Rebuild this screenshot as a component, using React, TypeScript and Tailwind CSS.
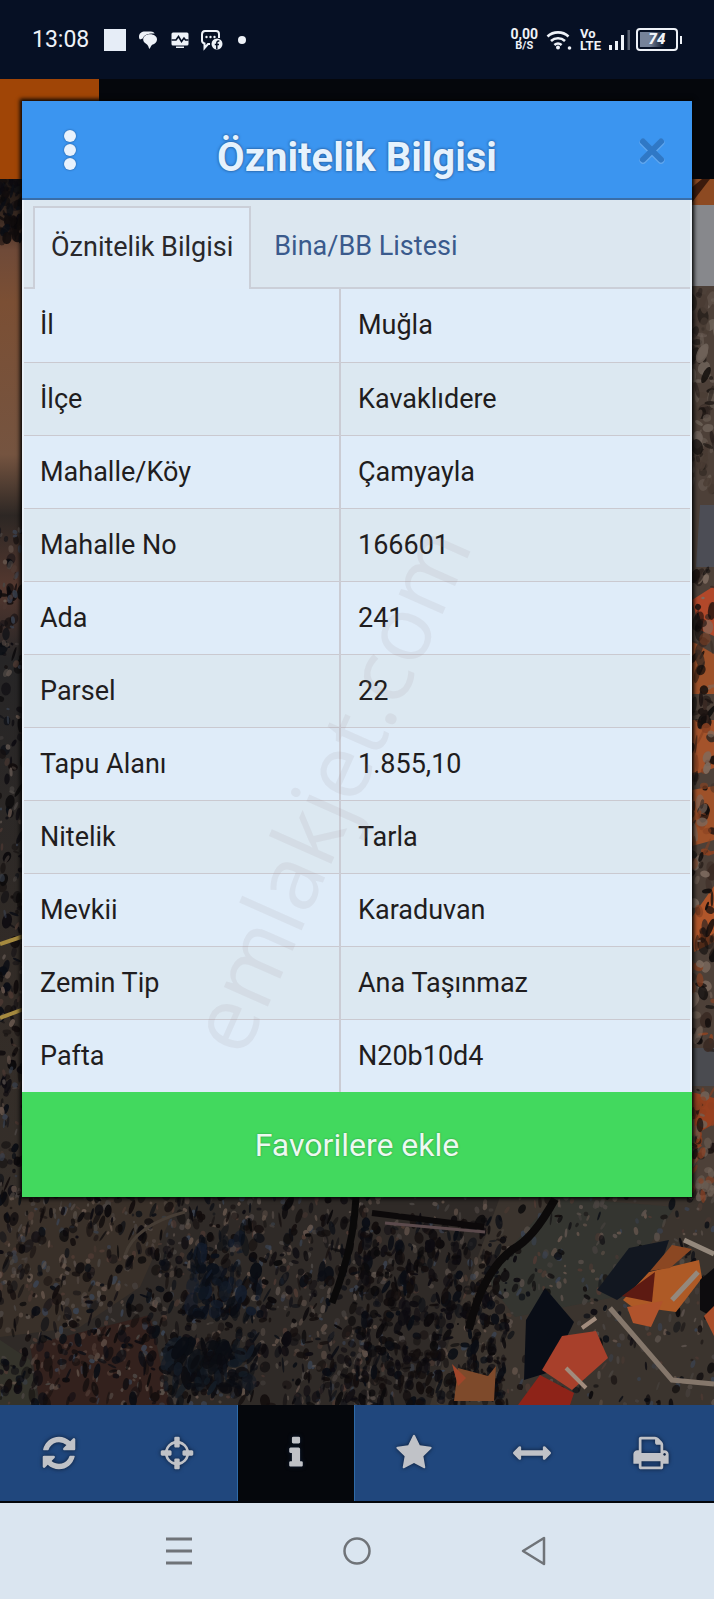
import { useState } from "react";

type Row = { label: string; value: string };

const rows: Row[] = [
  { label: "İl", value: "Muğla" },
  { label: "İlçe", value: "Kavaklıdere" },
  { label: "Mahalle/Köy", value: "Çamyayla" },
  { label: "Mahalle No", value: "166601" },
  { label: "Ada", value: "241" },
  { label: "Parsel", value: "22" },
  { label: "Tapu Alanı", value: "1.855,10" },
  { label: "Nitelik", value: "Tarla" },
  { label: "Mevkii", value: "Karaduvan" },
  { label: "Zemin Tip", value: "Ana Taşınmaz" },
  { label: "Pafta", value: "N20b10d4" },
];

const tabs = ["Öznitelik Bilgisi", "Bina/BB Listesi"];

const tools = [
  {
    name: "Yenile",
    d: "M1639 1056q0 5-1 7-64 268-268 434.500t-478 166.500q-146 0-282.500-55t-243.500-157l-129 129q-19 19-45 19t-45-19-19-45v-448q0-26 19-45t45-19h448q26 0 45 19t19 45-19 45l-137 137q71 66 161 102t187 36q134 0 250-65t186-179q11-17 53-117 8-23 30-23h192q13 0 22.500 9.500t9.500 22.500zm25-800v448q0 26-19 45t-45 19h-448q-26 0-45-19t-19-45 19-45l138-138q-148-137-349-137-134 0-250 65t-186 179q-11 17-53 117-8 23-30 23h-199q-13 0-22.500-9.500t-9.500-22.500v-7q65-268 270-434.500t480-166.500q146 0 284 55.500t245 156.500l130-129q19-19 45-19t45 19 19 45z",
  },
  {
    name: "Konum",
    d: "M1325 1024h-109q-26 0-45-19t-19-45v-128q0-26 19-45t45-19h109q-32-108-112.500-188.500t-188.500-112.500v109q0 26-19 45t-45 19h-128q-26 0-45-19t-19-45v-109q-108 32-188.500 112.500t-112.500 188.500h109q26 0 45 19t19 45v128q0 26-19 45t-45 19h-109q32 108 112.500 188.500t188.500 112.500v-109q0-26 19-45t45-19h128q26 0 45 19t19 45v109q108-32 188.500-112.500t112.500-188.500zm339-192v128q0 26-19 45t-45 19h-143q-37 161-154.500 278.500t-278.500 154.500v143q0 26-19 45t-45 19h-128q-26 0-45-19t-19-45v-143q-161-37-278.500-154.500t-154.500-278.500h-143q-26 0-45-19t-19-45v-128q0-26 19-45t45-19h143q37-161 154.500-278.500t278.500-154.500v-143q0-26 19-45t45-19h128q26 0 45 19t19 45v143q161 37 278.500 154.500t154.500 278.500h143q26 0 45 19t19 45z",
  },
  {
    name: "Bilgi",
    d: "M1216 1344v128q0 26-19 45t-45 19h-512q-26 0-45-19t-19-45v-128q0-26 19-45t45-19h64v-384h-64q-26 0-45-19t-19-45v-128q0-26 19-45t45-19h384q26 0 45 19t19 45v576h64q26 0 45 19t19 45zm-128-1152v192q0 26-19 45t-45 19h-256q-26 0-45-19t-19-45v-192q0-26 19-45t45-19h256q26 0 45 19t19 45z",
  },
  {
    name: "Favoriler",
    d: "M1728 647q0 22-26 48l-363 354 86 500q1 7 1 20 0 21-10.500 35.500t-30.500 14.500q-19 0-40-12l-449-236-449 236q-22 12-40 12-21 0-31.500-14.500t-10.500-35.500q0-6 2-20l86-500-364-354q-25-27-25-48 0-37 56-46l502-73 225-455q19-41 49-41t49 41l225 455 502 73q56 9 56 46z",
  },
  {
    name: "Ölç",
    d: "M1792 896q0 26-19 45l-256 256q-19 19-45 19t-45-19-19-45v-128h-1024v128q0 26-19 45t-45 19-45-19l-256-256q-19-19-19-45t19-45l256-256q19-19 45-19t45 19 19 45v128h1024v-128q0-26 19-45t45-19 45 19l256 256q19 19 19 45z",
  },
  {
    name: "Yazdır",
    d: "M448 1536h896v-256h-896v256zm0-640h896v-384h-160q-40 0-68-28t-28-68v-160h-640v640zm1152 64q0-26-19-45t-45-19-45 19-19 45 19 45 45 19 45-19 19-45zm128 0v416q0 13-9.500 22.500t-22.500 9.500h-224v160q0 40-28 68t-68 28h-960q-40 0-68-28t-28-68v-160h-224q-13 0-22.500-9.500t-9.500-22.500v-416q0-79 56.500-135.500t135.500-56.500h64v-544q0-40 28-68t68-28h672q40 0 88 20t76 48l152 152q28 28 48 76t20 88v256h64q79 0 135.500 56.500t56.500 135.500z",
  },
];

type Blob = { x: number; y: number; rx: number; ry: number; a: number; fill: string; o: number };

// Small seeded generator, so the terrain is the same on every render
function scatter(
  seed: number,
  count: number,
  area: [number, number, number, number],
  colors: string[],
  size: number,
): Blob[] {
  let s = seed;
  const next = () => {
    s = (s * 16807) % 2147483647;
    return s / 2147483647;
  };
  return Array.from({ length: count }, () => ({
    x: Math.round(area[0] + next() * area[2]),
    y: Math.round(area[1] + next() * area[3]),
    rx: 1 + next() * size,
    ry: 1 + next() * size * 1.8,
    a: Math.round(next() * 50 - 15),
    fill: colors[Math.floor(next() * colors.length)],
    o: 0.45 + next() * 0.5,
  }));
}

const dark = ["#0b090b", "#0d0b10", "#120d0d", "#0a0d14"];
const light = ["#5b514b", "#4a4441", "#65554c", "#3a4250", "#4e3a33"];

const terrain: Blob[] = [
  ...scatter(41, 700, [0, 1190, 370, 215], light, 2),
  ...scatter(7, 720, [0, 1190, 370, 215], dark, 4),
  ...scatter(19, 420, [355, 1190, 359, 215], light, 2),
  ...scatter(23, 560, [355, 1220, 150, 185], dark, 4),
  ...scatter(77, 130, [500, 1190, 214, 215], dark, 3),
  ...scatter(91, 140, [0, 520, 24, 680], dark, 4),
  ...scatter(13, 90, [0, 520, 24, 680], light, 2),
  ...scatter(57, 60, [0, 179, 24, 60], dark, 5),
];

const shade: Blob[] = [
  ...scatter(101, 90, [190, 1230, 70, 90], ["#0b1019", "#0a0d13", "#131c2b"], 6),
  ...scatter(103, 90, [165, 1345, 90, 45], ["#0a0d13", "#0b0b10", "#141c26"], 7),
];

const roofs: Blob[] = [
  ...scatter(31, 90, [690, 290, 24, 200], ["#6e6259", "#2a211d", "#4a3c34", "#17120f"], 5),
  ...scatter(67, 150, [690, 570, 24, 490], ["#1c1311", "#7e6c60", "#0e0b0b", "#8a4222", "#3a2a23"], 5),
  ...scatter(83, 60, [690, 1090, 24, 110], ["#1c1311", "#6f6157", "#8d3f20"], 4),
];

function Blobs({ items }: { items: Blob[] }) {
  return (
    <>
      {items.map((b, i) => (
        <ellipse
          key={i}
          cx={b.x}
          cy={b.y}
          rx={b.rx}
          ry={b.ry}
          fill={b.fill}
          opacity={b.o}
          transform={`rotate(${b.a} ${b.x} ${b.y})`}
        />
      ))}
    </>
  );
}

function SatelliteMap() {
  return (
    <svg
      className="absolute inset-0 h-full w-full"
      viewBox="0 179 714 1226"
      preserveAspectRatio="xMidYMid slice"
      aria-hidden="true"
    >
      <defs>
        <linearGradient id="west" x1="0" y1="0" x2="0" y2="1">
          <stop offset="0" stopColor="#1a1512" />
          <stop offset="0.04" stopColor="#3a2a22" />
          <stop offset="0.07" stopColor="#6f4a38" />
          <stop offset="0.12" stopColor="#7b4f34" />
          <stop offset="0.27" stopColor="#755440" />
          <stop offset="0.33" stopColor="#2d2724" />
          <stop offset="0.4" stopColor="#54382f" />
          <stop offset="0.47" stopColor="#262526" />
          <stop offset="0.8" stopColor="#332c27" />
          <stop offset="1" stopColor="#352f2a" />
        </linearGradient>
      </defs>
      <rect y="179" width="714" height="1226" fill="#2f2a27" />
      <rect y="179" width="40" height="1020" fill="url(#west)" />
      <rect x="680" y="179" width="34" height="1020" fill="#4d4038" />
      <path d="M0 1197h180l-40 90-60 40-80 10z" fill="#393029" />
      <path d="M0 1340l30 20 8 45H0z" fill="#34332b" />
      <path d="M30 1345l120-30 20 90H40z" fill="#33211d" />
      <path d="M500 1197h214v208H430l30-100z" fill="#3b342e" />
      <path d="M555 1197l120 10-60 90-100 20-30-40z" fill="#343530" />
      <Blobs items={terrain} />
      <Blobs items={shade} />

      {/* lanes */}
      <path d="M356 1197q-2 50-24 106" fill="none" stroke="#0a0909" strokeWidth="7" />
      <path d="M555 1199q-22 40-42 50-30 22-44 80" fill="none" stroke="#0c0a0a" strokeWidth="8" />
      <path d="M372 1213l112 14" fill="none" stroke="#0c090a" strokeWidth="6" />
      <path d="M385 1223l100 9" fill="none" stroke="#5b4a4c" strokeWidth="3" />
      <path d="M125 1255q10-30 60-43" fill="none" stroke="#463d35" strokeWidth="3" />

      {/* houses in the south east */}
      <path d="M545 1288l29 34-24 50-26 8 2-60z" fill="#090d16" />
      <path d="M597 1290l32-42 40-8-10 30-42 30z" fill="#121720" />
      <path d="M562 1336l34-5 12 27-36 32-30-20z" fill="#a8402b" />
      <path d="M540 1375l34 18-4 12h-52z" fill="#8e2318" />
      <path d="M649 1272l50-12 3 18-26 34-45-6-8-6z" fill="#ae5a26" />
      <path d="M655 1272l-3 30-30-6z" fill="#5d1a12" />
      <path d="M627 1307l36-6-12 26-18-4z" fill="#b0532c" />
      <path d="M672 1245l-22 26 20-3 22-19z" fill="#8b4722" />
      <path d="M458 1368l30 8 8-10-2 35h-40z" fill="#7e4a2b" />
      <path d="M452 1364l14 14-8 8z" fill="#a0452a" />
      <path d="M610 1308l62 72 42 4" fill="none" stroke="#85776b" strokeWidth="5" />
      <path d="M566 1368l20 20M582 1328l14-10" fill="none" stroke="#a18c7d" strokeWidth="4" />
      <path d="M684 1240l30 14M672 1300l26-28" fill="none" stroke="#94887c" strokeWidth="5" />
      <path d="M700 1280l14-12v50l-14-8z" fill="#0d0c0e" />
      <path d="M704 1316l10-10v30z" fill="#a94d29" />

      {/* west edge parcel lines */}
      <path d="M0 944l24-8M0 1018l24-9" fill="none" stroke="#a58a3f" strokeWidth="4" />

      {/* east edge roofs */}
      <path d="M690 179h24v26h-24z" fill="#8d4a22" />
      <path d="M690 205l20-26h-8l-12 10z" fill="#3b1a0c" />
      <path d="M700 505h14v62h-18z" fill="#4c4d55" />
      <path d="M692 600l22-14v50l-14-6z" fill="#b1482a" />
      <path d="M690 640l24 14v40h-24z" fill="#9d5129" />
      <path d="M690 720h24v48l-24 8z" fill="#a4532b" />
      <path d="M692 790l22-4v54l-22 6z" fill="#9e5129" />
      <path d="M690 920l24-34v56l-20 10z" fill="#b1562a" />
      <path d="M690 1048h24v38h-24z" fill="#4a4b50" />
      <path d="M692 1092l22 6v26l-22 12z" fill="#97401f" />
      <Blobs items={roofs} />
    </svg>
  );
}

function StatusBar() {
  return (
    <header className="flex h-[79px] items-center justify-between bg-[#061024] px-8 text-[#eef2f8]">
      <div className="flex items-center">
        <span className="text-[23px] leading-7">13:08</span>
        <span className="ml-[15px] h-[22px] w-[22px] bg-[#e6edf7]" />
        <svg className="ml-3 h-5 w-5" viewBox="0 0 20 20" fill="currentColor" aria-hidden="true">
          <path d="M1 6.500C1 3.500 3.600 1.500 7 1.500h6c1.500 0 3 .8 3.700 2C11 3 5.500 5 4.700 8.500L2 9.500C1 8.500 1 7.500 1 6.500z" />
          <path d="M19 9.500c0 2.500-2 4.500-4.800 5.200-1 1-1.600 2.500-2.700 4.300-1-1.500-1.200-3.600-2.500-4.600C6.600 13 5.200 11.500 5.200 9.500c0-3 3-5.200 6.900-5.200S19 6.500 19 9.500z" />
        </svg>
        <svg className="ml-3 h-5 w-5" viewBox="0 0 20 20" aria-hidden="true">
          <path fill="currentColor" d="M3 2.500h14a1.500 1.500 0 0 1 1.500 1.500v10a1.500 1.500 0 0 1-1.500 1.500H3A1.500 1.500 0 0 1 1.500 14V4A1.500 1.500 0 0 1 3 2.500zM6 16.500h8V18H6z" />
          <path fill="none" stroke="#061024" strokeWidth="1.600" d="M1.500 10H6l2.500-3.500 3 5L14 8l1.500 2h3" />
        </svg>
        <svg className="ml-[9px] h-6 w-6" viewBox="0 0 24 24" aria-hidden="true">
          <path fill="none" stroke="currentColor" strokeWidth="2" d="M11 16H9l-3.500 4v-4.500C3.500 15 3 14 3 12.500V6.500C3 4 4 3 6 3h11c2 0 3 1 3 3v4" />
          <g fill="currentColor">
            <circle cx="7.500" cy="9" r="1.200" />
            <circle cx="11.500" cy="9" r="1.200" />
            <circle cx="15.500" cy="9" r="1.200" />
            <circle cx="18" cy="16" r="5.500" />
          </g>
          <path fill="none" stroke="#061024" strokeWidth="1.500" d="M20.300 13.200c-2-.4-2.500.6-2.500 2V21M15.800 16.500h4.200" />
        </svg>
        <span className="ml-[15px] h-2 w-2 rounded-full bg-current" />
      </div>
      <div className="flex items-center">
        <div className="flex flex-col items-center text-[14px] font-bold leading-[12px]">
          <span>0,00</span>
          <span className="text-[11px]">B/S</span>
        </div>
        <svg className="ml-2 h-6 w-[26px]" viewBox="0 0 26 24" fill="none" stroke="currentColor" aria-hidden="true">
          <path strokeWidth="2.600" d="M1.500 8.500a15.500 15.500 0 0 1 21 0M5 13a10.400 10.400 0 0 1 14 0M8.400 17a5.600 5.600 0 0 1 7.200 0" />
          <circle cx="12" cy="19.500" r="2" fill="currentColor" stroke="none" />
          <circle cx="23.500" cy="20" r="1.800" fill="currentColor" stroke="none" />
        </svg>
        <div className="ml-2 flex flex-col text-[13px] font-bold leading-[12px]">
          <span>Vo</span>
          <span>LTE</span>
        </div>
        <svg className="ml-2 h-6 w-[22px]" viewBox="0 0 22 24" fill="currentColor" aria-hidden="true">
          <path d="M0 17h3v5H0zM6 13h3v9H6zM12 7h3v15h-3z" />
          <path d="M18.500 2H21v20h-2.500z" opacity=".35" />
        </svg>
        <div className="ml-[5px] flex h-[23px] w-[42px] items-center justify-center rounded-[4px] border-2 border-current bg-linear-to-r from-[#76839a] from-30% to-transparent to-70% bg-clip-content p-[2px] text-[15px] font-black italic leading-none">
          74
        </div>
        <span className="ml-[2px] h-2 w-[2px] bg-current" />
      </div>
    </header>
  );
}

export default function App() {
  const [tab, setTab] = useState(tabs[0]);
  const [tool, setTool] = useState("Bilgi");

  return (
    <div className="relative flex min-h-screen flex-col overflow-hidden bg-[#060910] font-['Roboto',sans-serif]">
      <StatusBar />

      <main className="relative flex-1 px-[22px] pt-[22px] pb-[208px]">
        <div className="absolute inset-0 flex flex-col">
          <div className="h-[100px] bg-[#05070c]">
            <div className="h-full w-[99px] bg-[#a04506]" />
          </div>
          <div className="relative flex flex-1 justify-end overflow-hidden pt-[26px]">
            <SatelliteMap />
            <div className="relative h-[81px] w-[24px] bg-[#87888c]" />
          </div>
        </div>

        <section
          aria-labelledby="dialog-title"
          className="relative shadow-[0_0_4px_2px_#050505]"
        >
          <div className="grid h-[99px] grid-cols-[1fr_auto_1fr] items-center border-b-2 border-[#3a6ea8] bg-[#3b95f0] px-[26px]">
            <button type="button" aria-label="Menü" className="flex w-11 flex-col items-center gap-[2px]">
              <span className="h-3 w-3 rounded-full bg-[#e8f2fd] shadow-[0_0_2px_#1b4d86]" />
              <span className="h-3 w-3 rounded-full bg-[#e8f2fd] shadow-[0_0_2px_#1b4d86]" />
              <span className="h-3 w-3 rounded-full bg-[#e8f2fd] shadow-[0_0_2px_#1b4d86]" />
            </button>
            <h2
              id="dialog-title"
              className="pt-4 text-[40px] font-bold leading-[48px] text-[#e6f2fd] [text-shadow:0_0_3px_#1b4173]"
            >
              Öznitelik Bilgisi
            </h2>
            <button type="button" aria-label="Kapat" className="justify-self-end">
              <svg className="h-7 w-7" viewBox="0 0 28 28" aria-hidden="true">
                <path d="M5 6.500l18 18M23 6.500l-18 18" stroke="#5fa6ee" strokeWidth="7" strokeLinecap="round" />
                <path d="M5 5.500l18 18M23 5.500l-18 18" stroke="#2f78c6" strokeWidth="6" strokeLinecap="round" />
              </svg>
            </button>
          </div>

          <div className="border-x-2 border-[#eaf1f8] bg-[#dce7f0]">
            <div role="tablist" className="flex h-[89px] items-end border-b-2 border-[#cbcfd8] pl-[9px]">
              {tabs.map((t) => (
                <button
                  key={t}
                  type="button"
                  role="tab"
                  aria-selected={tab === t}
                  onClick={() => setTab(t)}
                  className={
                    tab === t
                      ? "-mb-[2px] h-[83px] border-x-2 border-t-2 border-[#cbcfd8] bg-[#e0ecf8] px-4 pb-1 text-[27px] leading-8 text-[#29282b]"
                      : "-mb-[2px] h-[83px] px-[23px] pb-1 text-[27px] leading-8 text-[#3a5a8c]"
                  }
                >
                  {t}
                </button>
              ))}
            </div>
            <table className="w-full border-collapse text-[27px] leading-8 text-[#1f1d20]">
              <tbody>
                {rows.map((row) => (
                  <tr
                    key={row.label}
                    className="h-[73px] border-b border-[#cac9d0] bg-[#dfecf9] last:border-b-0 even:bg-[#dce8f1]"
                  >
                    <th
                      scope="row"
                      className="w-[316px] border-r-2 border-[#cbccd4] pl-4 text-left font-normal"
                    >
                      {row.label}
                    </th>
                    <td className="pl-[17px]">{row.value}</td>
                  </tr>
                ))}
              </tbody>
            </table>
          </div>

          <button
            type="button"
            className="block h-[105px] w-full bg-[#42d95e] text-[32px] leading-9 text-[#edf9f0] [text-shadow:0_0_2px_#2b8a42]"
          >
            Favorilere ekle
          </button>
        </section>
      </main>

      <nav className="grid h-[98px] grid-cols-6 border-b-2 border-[#03060c] bg-[#20477d] pr-1">
        {tools.map((t) => (
          <button
            key={t.name}
            type="button"
            aria-label={t.name}
            aria-pressed={tool === t.name}
            onClick={() => setTool(t.name)}
            className={
              tool === t.name
                ? "flex items-center justify-center border-x border-[#2f6ba8] bg-[#05070c]"
                : "flex items-center justify-center"
            }
          >
            <svg
              className="h-[38px] w-[38px] text-[#c0c2c7] drop-shadow-[0_0_2px_#0b1a33]"
              viewBox="0 0 1792 1792"
              fill="currentColor"
              aria-hidden="true"
            >
              <path d={t.d} />
            </svg>
          </button>
        ))}
      </nav>

      <footer className="flex h-24 items-center justify-center gap-[146px] bg-[#dae5f0] text-[#6f7378]">
        <button type="button" aria-label="Son uygulamalar">
          <svg className="h-8 w-8" viewBox="0 0 32 32" fill="none" stroke="currentColor" strokeWidth="3" aria-hidden="true">
            <path d="M3 4h26M3 16h26M3 28h26" />
          </svg>
        </button>
        <button type="button" aria-label="Ana ekran">
          <svg className="h-8 w-8" viewBox="0 0 32 32" fill="none" stroke="currentColor" strokeWidth="2.500" aria-hidden="true">
            <circle cx="16" cy="16" r="12.500" />
          </svg>
        </button>
        <button type="button" aria-label="Geri">
          <svg className="h-8 w-8" viewBox="0 0 32 32" fill="none" stroke="currentColor" strokeWidth="2.500" strokeLinejoin="round" aria-hidden="true">
            <path d="M25 3v26L4 16z" />
          </svg>
        </button>
      </footer>

      <div className="pointer-events-none absolute inset-0 flex items-center justify-center pr-[60px] pb-6">
        <span className="-rotate-[66deg] font-['Open_Sans',sans-serif] text-[90px] leading-none text-[#9c8f96]/12">
          emlakjet.com
        </span>
      </div>
    </div>
  );
}
